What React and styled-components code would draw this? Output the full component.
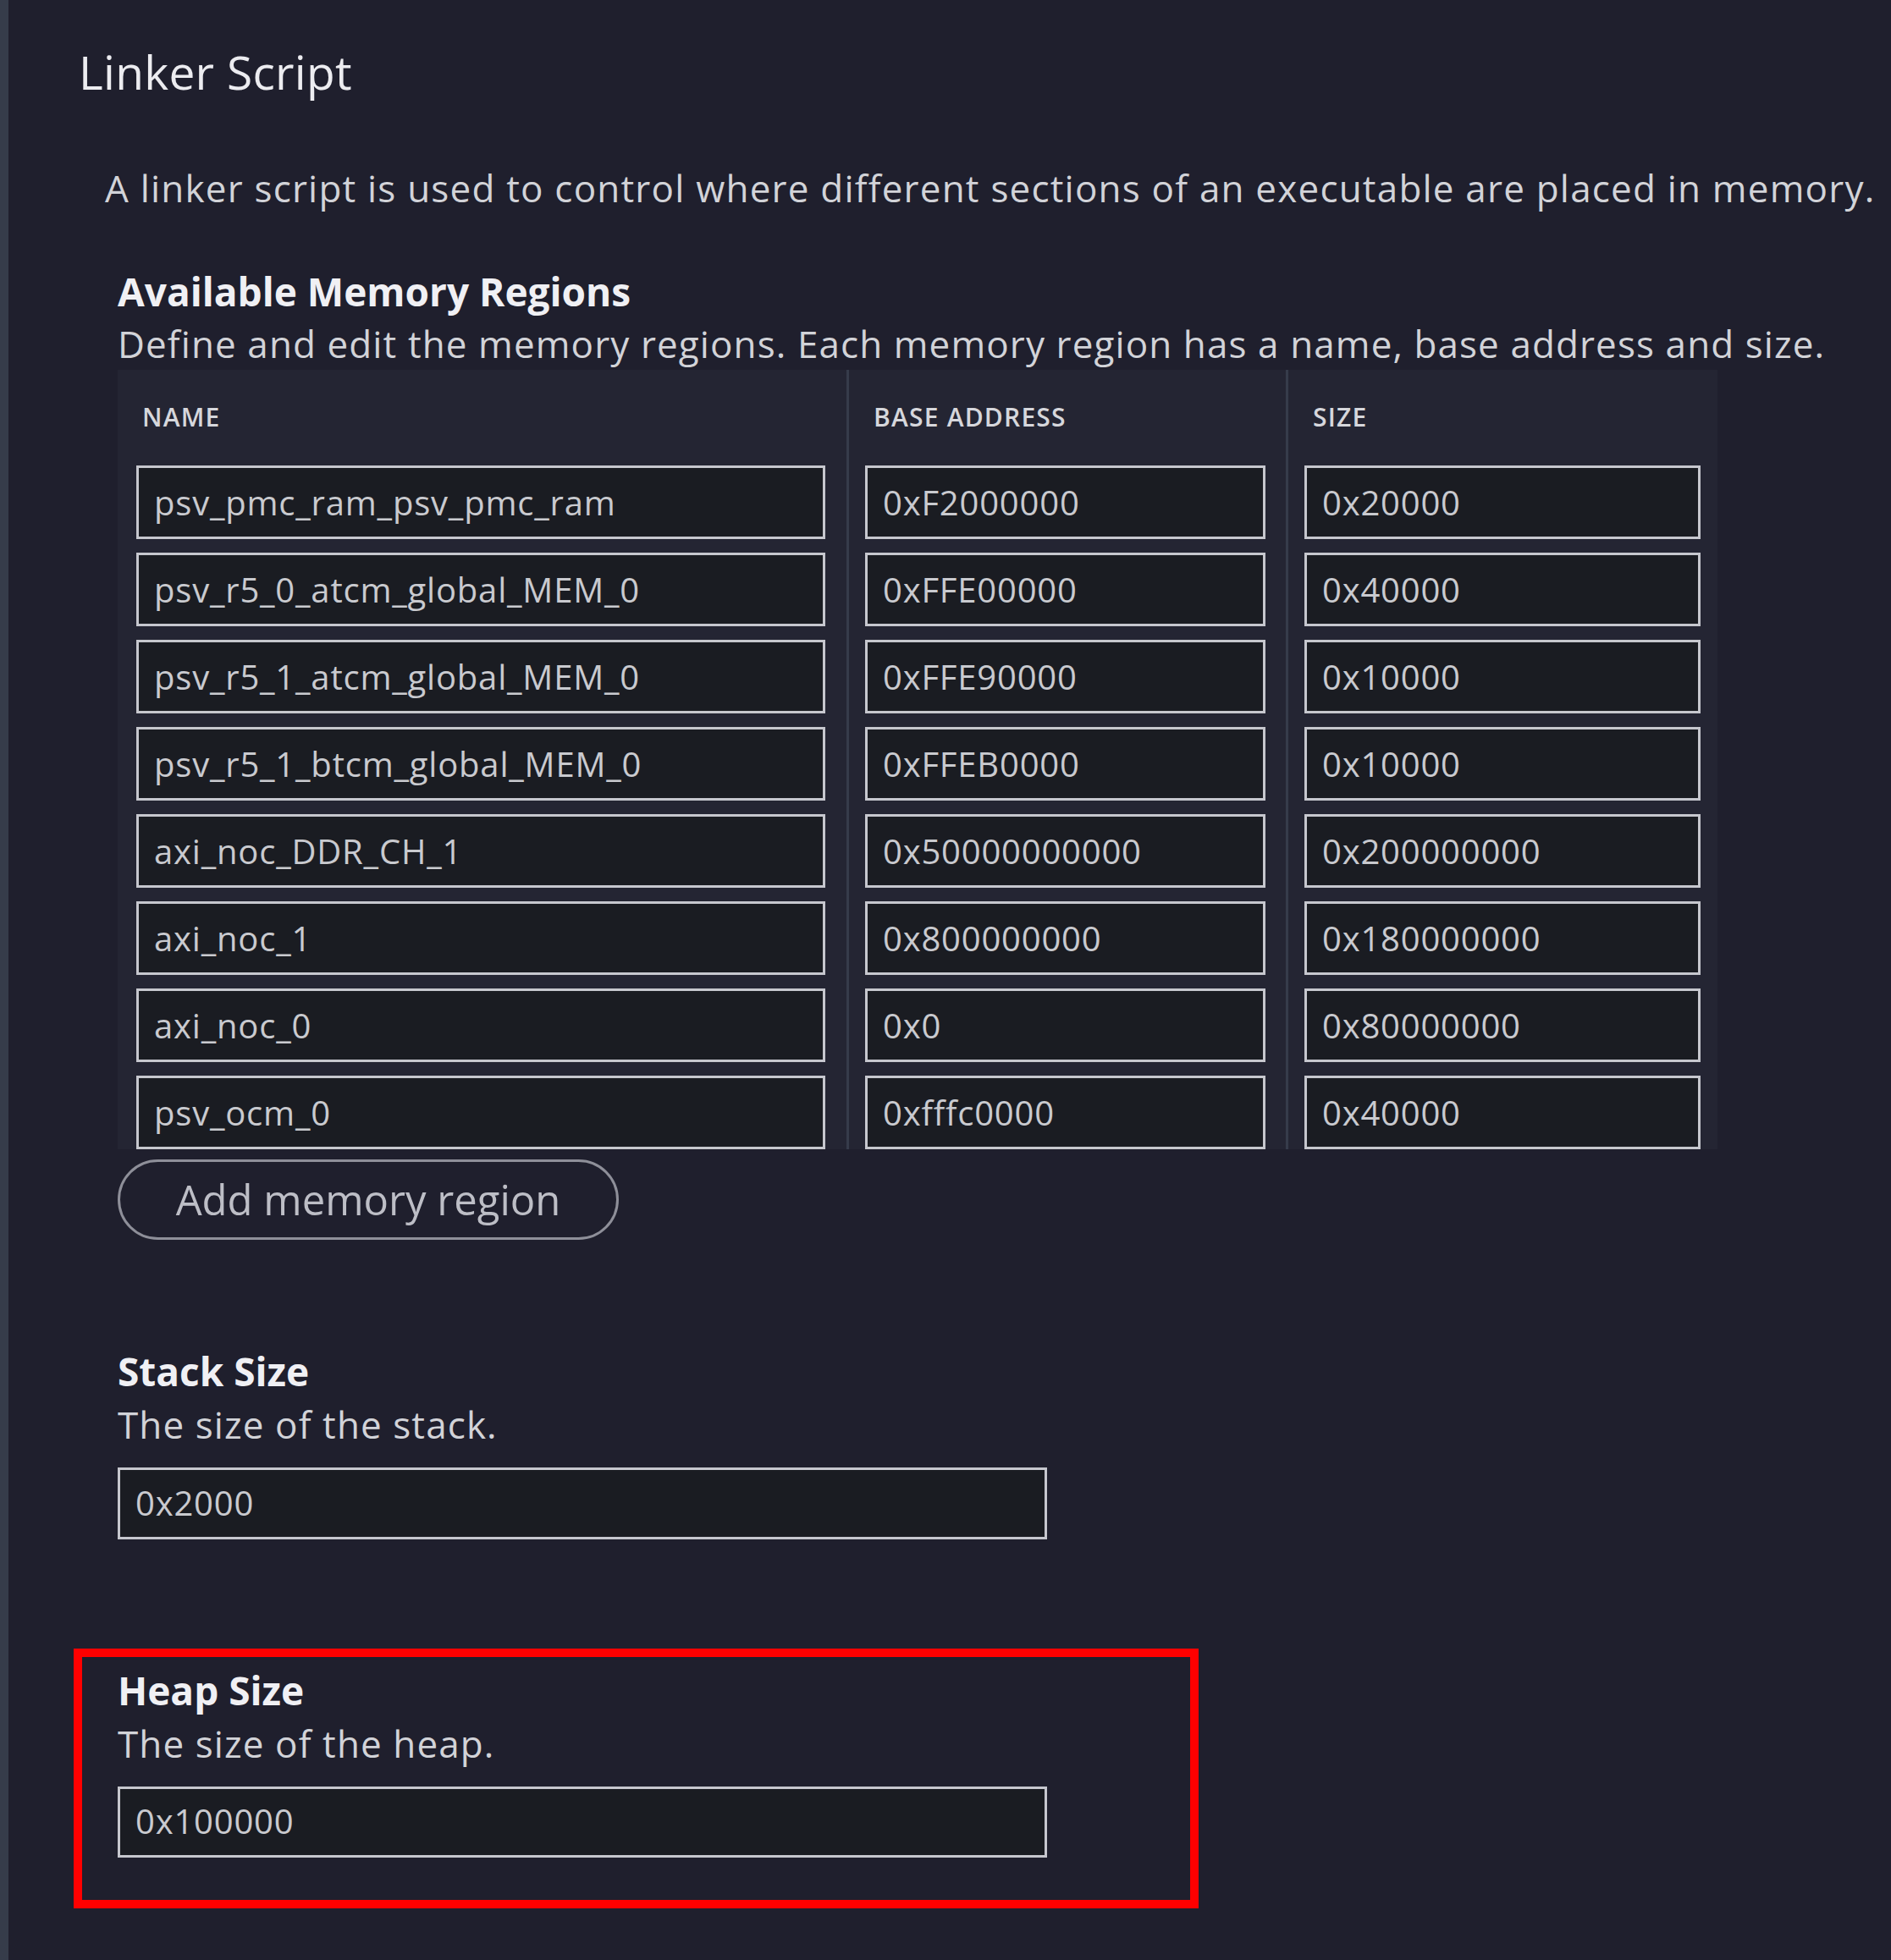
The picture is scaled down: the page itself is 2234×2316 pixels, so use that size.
import React from "react";
import styled, { createGlobalStyle } from "styled-components";

const GlobalStyle = createGlobalStyle`
  html, body {
    margin: 0;
    padding: 0;
    background: #1f1f2d;
  }
  body {
    font-family: "Open Sans", "Noto Sans", sans-serif;
    color: #d0d0d6;
  }
  * { box-sizing: border-box; }
`;

const Page = styled.div`
  min-height: 2316px;
  background: #1f1f2d;
  border-left: 10px solid #363c4a;
  padding: 48px 0 0 77px;
  display: flex;
  flex-direction: column;
  align-items: flex-start;
`;

const Title = styled.h1`
  margin: 0;
  padding-left: 6px;
  font-size: 55px;
  font-weight: 400;
  line-height: 1.362;
  letter-spacing: 0.3px;
  color: #ececf0;
`;

const Intro = styled.p`
  margin: 70px 0 0;
  padding-left: 37px;
  font-size: 44px;
  line-height: 1.362;
  letter-spacing: 1.2px;
  color: #d2d3d8;
`;

const Section = styled.section`
  margin-top: ${(p) => p.$top}px;
  padding-left: 52px;
  display: flex;
  flex-direction: column;
  align-items: flex-start;
`;

const Heading = styled.h2`
  margin: 0;
  font-size: 46px;
  font-weight: 700;
  line-height: 1.362;
  color: #f0f0f4;
`;

const Help = styled.p`
  margin: 2px 0 0;
  font-size: 44px;
  line-height: 1.362;
  letter-spacing: 1.1px;
  color: #d2d3d8;
`;

const Table = styled.div`
  display: grid;
  grid-template-columns: 861px 519px 510px;
  background: #242533;
`;

const Column = styled.div`
  display: flex;
  flex-direction: column;
  gap: 16px;
  padding: 0 ${(p) => p.$right}px 0 ${(p) => (p.$first ? 22 : 19)}px;
  border-left: ${(p) => (p.$first ? "none" : "3px solid #363c4b")};
`;

const HeaderCell = styled.div`
  height: 97px;
  padding: 35px 0 0 ${(p) => (p.$first ? 7 : 10)}px;
  font-size: 30px;
  font-weight: 600;
  line-height: 41px;
  color: #d6d7dc;
  letter-spacing: 1.2px;
`;

const Field = styled.div`
  width: ${(p) => (p.$width ? `${p.$width}px` : "100%")};
  height: ${(p) => p.$height || 87}px;
  display: flex;
  align-items: center;
  padding-left: 18px;
  background: #1a1c22;
  border: 3px solid #c6c7ce;
  font-size: 40px;
  line-height: 1.362;
  letter-spacing: 0.8px;
  color: #c9cacf;
  white-space: nowrap;
  overflow: hidden;
`;

const AddButton = styled.button`
  margin-top: 12px;
  width: 592px;
  height: 95px;
  padding: 0;
  border: 3px solid #8e8f99;
  border-radius: 48px;
  background: transparent;
  font-family: "Open Sans", "Noto Sans", sans-serif;
  font-size: 49px;
  line-height: 1;
  color: #bdbec6;
  display: flex;
  align-items: center;
  justify-content: center;
`;

const FieldGap = styled.div`
  height: 20px;
`;

const Highlight = styled.div`
  margin-top: 129px;
  width: 1329px;
  border: 10px solid #ff0000;
  padding: 8px 0 50px 42px;
  display: flex;
  flex-direction: column;
  align-items: flex-start;
`;

const regions = [
  ["psv_pmc_ram_psv_pmc_ram", "0xF2000000", "0x20000"],
  ["psv_r5_0_atcm_global_MEM_0", "0xFFE00000", "0x40000"],
  ["psv_r5_1_atcm_global_MEM_0", "0xFFE90000", "0x10000"],
  ["psv_r5_1_btcm_global_MEM_0", "0xFFEB0000", "0x10000"],
  ["axi_noc_DDR_CH_1", "0x50000000000", "0x200000000"],
  ["axi_noc_1", "0x800000000", "0x180000000"],
  ["axi_noc_0", "0x0", "0x80000000"],
  ["psv_ocm_0", "0xfffc0000", "0x40000"],
];

const columns = [
  { label: "NAME", right: 25, first: true },
  { label: "BASE ADDRESS", right: 24 },
  { label: "SIZE", right: 20 },
];

export default function App() {
  return (
    <>
      <GlobalStyle />
      <Page>
        <Title>Linker Script</Title>
        <Intro>
          A linker script is used to control where different sections of an executable are placed in memory.
        </Intro>

        <Section $top={60}>
          <Heading>Available Memory Regions</Heading>
          <Help>Define and edit the memory regions. Each memory region has a name, base address and size.</Help>
          <Table>
            {columns.map((col, ci) => (
              <Column key={col.label} $first={col.first} $right={col.right}>
                <HeaderCell $first={col.first}>{col.label}</HeaderCell>
                {regions.map((row) => (
                  <Field key={row[0] + ci}>{row[ci]}</Field>
                ))}
              </Column>
            ))}
          </Table>
          <AddButton>Add memory region</AddButton>
        </Section>

        <Section $top={124}>
          <Heading>Stack Size</Heading>
          <Help>The size of the stack.</Help>
          <FieldGap />
          <Field $width={1098} $height={85}>0x2000</Field>
        </Section>

        <Highlight>
          <Heading>Heap Size</Heading>
          <Help>The size of the heap.</Help>
          <FieldGap />
          <Field $width={1098} $height={84}>0x100000</Field>
        </Highlight>
      </Page>
    </>
  );
}
